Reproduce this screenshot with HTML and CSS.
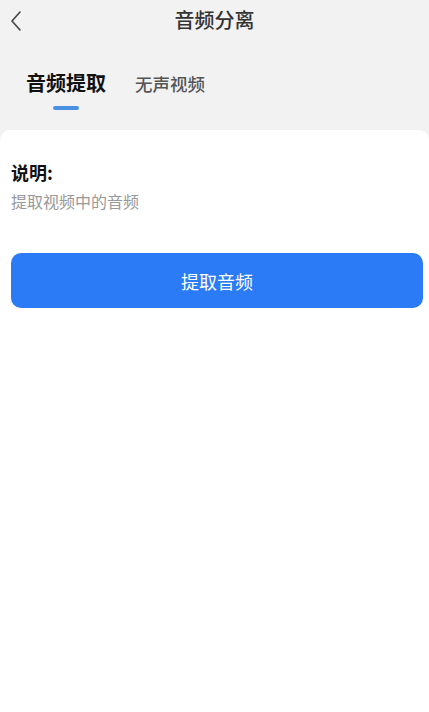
FILE: index.html
```html
<!DOCTYPE html>
<html lang="zh">
<head>
<meta charset="utf-8">
<link rel="stylesheet" href="styles.css">
</head>
<body>
<div class="page">
  <header class="nav">
    <span class="back">
      <svg width="14" height="22" viewBox="0 0 14 22"><path d="M11 2 L3 11 L11 20" fill="none" stroke="#444" stroke-width="1.6" stroke-linecap="round" stroke-linejoin="round"/></svg>
    </span>
    <h1 class="title">音频分离</h1>
  </header>
  <nav class="tabs">
    <div class="tab active">音频提取<span class="bar"></span></div>
    <div class="tab">无声视频</div>
  </nav>
  <main class="card">
    <div class="label">说明:</div>
    <div class="desc">提取视频中的音频</div>
    <button class="btn">提取音频</button>
  </main>
</div>
</body>
</html>
```

FILE: styles.css
```css
* { box-sizing: border-box; }
html, body { margin: 0; padding: 0; height: 100%; }
body {
  background: #f2f2f2;
  font-family: "Noto Sans CJK SC", "Noto Sans", sans-serif;
  color: #222;
}
.page { display: flex; flex-direction: column; height: 712px; }
.nav {
  height: 40px;
  display: flex;
  align-items: center;
  justify-content: center;
  position: relative;
}
.back { position: absolute; left: 9px; top: 10px; display: flex; }
.title {
  margin: 0 0 1px;
  font-size: 20px;
  font-weight: 500;
  color: #333;
}
.tabs {
  height: 90px;
  display: flex;
  align-items: flex-start;
  padding: 29px 0 0 26px;
  gap: 29px;
}
.tab {
  position: relative;
  font-size: 17.5px;
  font-weight: 500;
  color: #555;
  line-height: 28px;
  margin-top: 1px;
}
.tab.active {
  font-size: 20px;
  font-weight: 700;
  color: #111;
  margin-top: 0;
}
.bar {
  position: absolute;
  left: 27px;
  top: 37px;
  width: 26px;
  height: 4px;
  border-radius: 2px;
  background: #4a90e2;
}
.card {
  flex: 1;
  background: #fff;
  border-radius: 10px 10px 0 0;
  padding: 29px 6px 0 11px;
  display: flex;
  flex-direction: column;
}
.label {
  font-size: 18px;
  font-weight: 700;
  color: #111;
  line-height: 26px;
}
.desc {
  font-size: 16px;
  color: #999;
  line-height: 22px;
  margin-top: 5px;
}
.btn {
  margin-top: 41px;
  height: 55px;
  border: none;
  border-radius: 10px;
  background: #2c7bf6;
  color: #fff;
  font-family: inherit;
  font-size: 18px;
  font-weight: 400;
  width: 412px;
}
```
